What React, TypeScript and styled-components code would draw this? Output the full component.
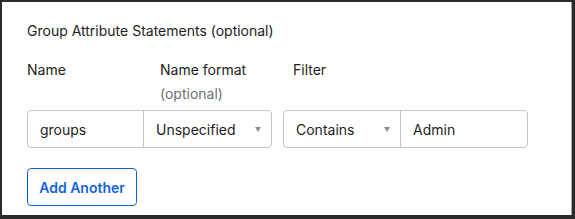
import React from "react"
import styled, { createGlobalStyle } from "styled-components"

const GlobalStyle = createGlobalStyle`
	html, body {
		margin: 0;
		padding: 0;
		background: #2c2a28;
	}
	body {
		font-family: Inter, "Liberation Sans", Arial, sans-serif;
		color: #1d1d21;
	}
`

const Panel = styled.section`
	box-sizing: border-box;
	margin: 2px 0 0 2px;
	width: 570px;
	height: 213px;
	background: #ffffff;
	border-right: 1px solid #a9a9ad;
	padding: 19px 0 0 25px;
	display: flex;
	flex-direction: column;
`

const Title = styled.h3`
	margin: 0;
	font-size: 14px;
	font-weight: 400;
	line-height: 20px;
`

const LabelRow = styled.div`
	margin-top: 19px;
	display: grid;
	grid-template-columns: 133px 133px 133px;
`

const Label = styled.div`
	font-size: 14px;
	line-height: 20px;
`

const Hint = styled.div`
	margin-top: 4px;
	font-size: 14px;
	line-height: 20px;
	color: #6e6e78;
`

const FieldRow = styled.div`
	margin-top: 6px;
	display: flex;
	gap: 11px;
`

const Group = styled.div`
	display: flex;
	height: 38px;
	box-sizing: border-box;
	border: 1px solid #c4c4ca;
	border-radius: 4px;
	overflow: hidden;
`

const Cell = styled.div<{ $w: number; $divider?: boolean }>`
	position: relative;
	box-sizing: border-box;
	width: ${p => p.$w}px;
	display: flex;
	align-items: center;
	padding-left: 12px;
	font-size: 14px;
	color: #1d1d21;
	border-right: ${p => (p.$divider ? "1px solid #c4c4ca" : "none")};
`

const Caret = styled.span`
	position: absolute;
	right: 10px;
	top: 50%;
	margin-top: -2px;
	width: 0;
	height: 0;
	border-left: 3.5px solid transparent;
	border-right: 3.5px solid transparent;
	border-top: 5px solid #8c8c96;
`

const AddButton = styled.button`
	margin-top: 20px;
	align-self: flex-start;
	box-sizing: border-box;
	width: 110px;
	height: 38px;
	background: #fff;
	border: 1px solid #1662dd;
	border-radius: 4px;
	color: #1662dd;
	font-family: inherit;
	font-size: 14px;
	font-weight: 600;
	padding: 0;
	cursor: pointer;
`

export default function App() {
	return (
		<>
			<GlobalStyle />
			<Panel>
				<Title>Group Attribute Statements (optional)</Title>
				<LabelRow>
					<Label>Name</Label>
					<div>
						<Label>Name format</Label>
						<Hint>(optional)</Hint>
					</div>
					<Label>Filter</Label>
				</LabelRow>
				<FieldRow>
					<Group>
						<Cell $w={116} $divider>groups</Cell>
						<Cell $w={127}>
							Unspecified
							<Caret />
						</Cell>
					</Group>
					<Group>
						<Cell $w={117} $divider>
							Contains
							<Caret />
						</Cell>
						<Cell $w={126}>Admin</Cell>
					</Group>
				</FieldRow>
				<AddButton>Add Another</AddButton>
			</Panel>
		</>
	)
}
